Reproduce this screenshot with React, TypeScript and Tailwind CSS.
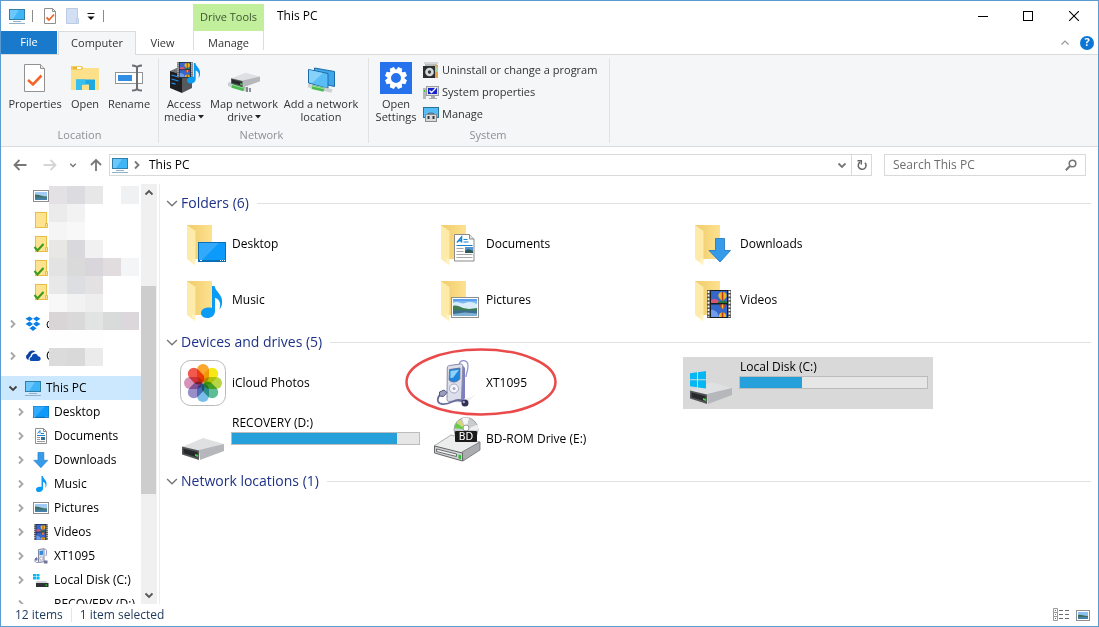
import { useState } from "react";
import type { ReactNode } from "react";
import clsx from "clsx";

/* ---------- shared picture pieces ---------- */

function MonitorIcon({ className = "w-4" }: { className?: string }) {
  return (
    <svg viewBox="0 0 16 16" className={clsx("shrink-0", className)} aria-hidden="true">
      <rect x="0" y="1" width="16" height="11" fill="#2f7fa8" />
      <rect x="1" y="2" width="14" height="9" fill="#3fb4f6" />
      <path d="M1 2h9L4 11H1z" fill="#6cc8fb" />
      <path d="M4 13.500h8M0 15.500h16" stroke="#8fb0c6" strokeWidth="1" />
    </svg>
  );
}

function DesktopArt() {
  return (
    <g>
      <rect x="0" y="0" width="28" height="20" fill="#0b6fb8" />
      <rect x="1" y="1" width="26" height="17" fill="#0c9bfb" />
      <path d="M1 1h20L4 18H1z" fill="#33a9fb" />
      <path d="M2 18.500h2M22 18.500h1M24 18.500h1M26 18.500h1" stroke="#fff" strokeWidth="1" />
    </g>
  );
}

function DocumentArt() {
  return (
    <g>
      <path d="M.5.5h15l4.500 4.500v22H.5z" fill="#fff" stroke="#8b8b8b" />
      <path d="M15.500.5v4.500H20" fill="#e4e4e4" stroke="#8b8b8b" />
      <path d="M3 8.500 7.500 3v5.500M4.500 6.800h3" fill="none" stroke="#1a85cf" strokeWidth="1.500" />
      <path d="M9.500 5.500h4M9.500 8h5M2.500 11.500h16" stroke="#1a85cf" strokeWidth="1.200" />
      <path d="M2.500 14.500h7M2.500 17.500h7M2.500 20.500h16M2.500 23.500h16" stroke="#a8a8a8" />
      <rect x="11" y="13" width="8" height="6" fill="#5693cf" />
      <path d="M11 17l3-2 5 2v2h-8z" fill="#2e5b55" />
    </g>
  );
}

function SmallDocumentArt() {
  return (
    <g>
      <path d="M2.500.5h8l3 3v12h-11z" fill="#fff" stroke="#8f8f8f" />
      <path d="M10.500.5v3h3" fill="none" stroke="#8f8f8f" />
      <path d="M4.500 5.500 7 2.500v3" fill="none" stroke="#1a85cf" />
      <path d="M4 7.500h8M8 5.500h3" stroke="#1a85cf" />
      <path d="M4 9.500h3M4 11.500h3M4 13.500h8" stroke="#9a9a9a" />
      <path d="M8 9h4v3H8z" fill="#3c6f96" />
    </g>
  );
}

function ArrowArt() {
  return <path d="M7.500.5h9v12h6L12 24 1 12.500h6.500z" fill="#369be9" stroke="#1d72c0" strokeWidth=".8" />;
}

function NoteArt() {
  return (
    <path
      d="M11 0h2.500c1 6 9 8.500 7.500 18-.4 2.500-1.600 4.500-2.200 5l-.3-.3c1.600-5 .5-9-4.500-11V25c0 4.500-3.500 7-8 7S0 29.500 0 26.800C0 23 5.500 20.500 11 22z"
      fill="#0a9bf5"
    />
  );
}

function PictureArt() {
  return (
    <g>
      <rect x=".5" y=".5" width="27" height="20" fill="#fff" stroke="#8f8f8f" />
      <rect x="2" y="2" width="24" height="17" fill="#7db8f0" />
      <path d="M2 2h24v2H2z" fill="#5c9fee" />
      <path d="M2 6c5-3 8 2 12 0s8-1 12 1v5H2z" fill="#d8ecfa" />
      <path d="M2 9c3-1 6 0 10 2l6 1 8-1v3H2z" fill="#3f7c52" />
      <path d="M2 13.500h24V19H2z" fill="#3d6f94" />
      <path d="M2 17l12-1.500 12 1v2.500H2z" fill="#7fb2d2" />
    </g>
  );
}

function SmallPictureArt() {
  return (
    <g>
      <rect x=".5" y="2.500" width="15" height="11" fill="#fff" stroke="#8f8f8f" />
      <rect x="2" y="4" width="12" height="8" fill="#9fcbf4" />
      <path d="M2 6.500c4 0 7 2 12 2V10H2z" fill="#3f6f5f" />
      <path d="M2 9.500h12V12H2z" fill="#4580a8" />
    </g>
  );
}

function FilmArt() {
  return (
    <g>
      <rect width="24" height="28" fill="#555" />
      <path d="M1.500 1v26M22.500 1v26" stroke="#fff" strokeWidth="1.800" strokeDasharray="2 1.600" />
      <rect x="3" y="0" width="18" height="28" fill="#1c1c1c" />
      <rect x="4" y="1" width="16" height="12" fill="#3566c9" />
      <rect x="4" y="14.500" width="16" height="12.500" fill="#3566c9" />
      <path d="M4 10c3-2 6-1 8 1v2H4z" fill="#d8557a" />
      <path d="M15.500 2c3.500 0 4.500 2.500 4 4.500-.3 1.800-2 3-4 4.500-2-1.500-3.700-2.700-4-4.500-.5-2 .5-4.500 4-4.500z" fill="#e9b81f" />
      <path d="M14.800 2h1.500v8.500h-1.500z" fill="#b83224" />
      <path d="M11 11.500h2.500l2-1 4.500 1V13h-9z" fill="#1f7a39" />
      <path d="M12.500 14.500h6c0 2-1.500 3.500-3 5-1.500-1.500-3-3-3-5z" fill="#c23a2a" />
      <path d="M14.800 14.500h1.500v4h-1.500z" fill="#f0c52c" />
      <path d="M4 20c3-1 4 2 6 2l2 5H4z" fill="#6f9dec" />
      <path d="M12 27c-.5-3 1-4.500 3.500-4.500S19.500 24 19 27z" fill="#e9b81f" />
      <path d="M14.800 22.500h1.500V27h-1.500z" fill="#b83224" />
    </g>
  );
}

function PlayerArt() {
  return (
    <g>
      <path d="M33 6c1-6 9-6 9 1 0 5-2 7-2 11" fill="none" stroke="#8b8ecb" strokeWidth="1.200" />
      <path d="M28 43l17-5 5-3-10 10z" fill="#efeff3" />
      <path d="M36 6l3 3v30l-3 4-6-1z" fill="#7d80c0" />
      <path d="M23.500 6.500l11-1.500c1.500 0 2.300.6 2.300 2l-1.300 32c-.1 1.500-.9 2.300-2.300 2.500l-9.700 1c-2 0-2.600-1-2.500-3L21.300 9c0-1.500.8-2.300 2.200-2.500z" fill="#dcdee9" stroke="#8a8cab" />
      <path d="M23.500 10.500l10.500-1.500-.2 11c-2.800 3.500-8 4-10.700 1z" fill="#1f86dc" stroke="#5f6690" strokeWidth=".8" />
      <path d="M24.500 12l8.500-1.200-6 8-2.600.3z" fill="#8fd2fa" />
      <circle cx="28" cy="29.500" r="4.500" fill="#f4f5fb" stroke="#a4a7c4" />
      <circle cx="28" cy="29.500" r="1.500" fill="#a6a9c8" />
      <path d="M15 35c-4 3-5 9 1 10 8 1 11-4 16-4 3 0 4 1 6 2" fill="none" stroke="#6a6e9c" strokeWidth="1.800" />
      <path d="M13.500 33l4.500-2 3 2.500-3.500 4-4-.5z" fill="#9a9dbd" stroke="#55597f" />
      <circle cx="39" cy="44" r="3.500" fill="#2f3250" />
      <circle cx="37.800" cy="43" r="1.200" fill="#a4a7cb" />
    </g>
  );
}

function SmallPlayerArt() {
  return (
    <g>
      <path d="M10 2c2-2 4-.5 3.500 2L13 8M4 9c-3 2-3 6 1 5.500" fill="none" stroke="#8b8ecb" />
      <path d="M5.500 1.500 11 .8v13l-5.500.7z" fill="#e4e5ee" stroke="#83869f" />
      <path d="M6.500 3 10 2.500v4.200l-3.500.5z" fill="#2f8ddc" />
      <circle cx="8.300" cy="10.500" r="1.600" fill="#fff" stroke="#9da0bb" strokeWidth=".8" />
      <path d="M11 12.500h3.500v3H11zM2 10h2.500v2.500H2z" fill="#6f7397" />
    </g>
  );
}

function DriveArt() {
  return (
    <g>
      <path d="M0 10 21 1l21 6-25 9z" fill="#dfe0e2" />
      <path d="M17 13 42 7v7L18 23z" fill="#b5b7bb" />
      <path d="M0 9.500 17 13.500V23L0 17.500z" fill="#54575a" />
      <path d="M1.500 11.500l14 3.600v5.500l-14-4.300z" fill="#26282a" />
      <path d="M13 17l3 .9v2l-3-.9z" fill="#37e03c" />
    </g>
  );
}

function SmallDriveArt() {
  return (
    <g>
      <path d="M3 9h10l2.500 2.500h-12z" fill="#d3d5d7" />
      <path d="M3 11h12.500v4H3z" fill="#2f3234" />
      <path d="M12.500 12.500H14v1.200h-1.500z" fill="#37e03c" />
    </g>
  );
}

function WindowsLogo() {
  return (
    <path
      d="M0 2.300 7 1.300v7H0zM8 1.200 16 0v8.300H8zM0 9.300h7v7l-7-1zM8 9.300h8v8.300l-8-1.200z"
      fill="#05b7f2"
    />
  );
}

const smallArt: Record<string, ReactNode> = {
  desktop: <g transform="translate(0 2) scale(.571 .6)"><DesktopArt /></g>,
  documents: <SmallDocumentArt />,
  downloads: <g transform="scale(.66)"><ArrowArt /></g>,
  music: <g transform="translate(3 0) scale(.5)"><NoteArt /></g>,
  pictures: <SmallPictureArt />,
  videos: <g transform="translate(1 0) scale(.58)"><FilmArt /></g>,
  player: <SmallPlayerArt />,
  drive: <SmallDriveArt />,
  windowsDrive: (
    <g>
      <SmallDriveArt />
      <path d="M0 2h3v2.500H0zM3.500 2h3v2.500h-3zM0 5h3v2.500H0zM3.500 5h3v2.500h-3z" fill="#05b7f2" />
    </g>
  ),
};

function SmallIcon({ name }: { name: string }) {
  return (
    <svg viewBox="0 0 16 16" className="h-4 w-4 shrink-0" aria-hidden="true">
      {smallArt[name]}
    </svg>
  );
}

function SmallFolder({ synced = false }: { synced?: boolean }) {
  return (
    <svg viewBox="0 0 16 16" className="h-4 w-4 shrink-0" aria-hidden="true">
      <rect x="2.500" y=".5" width="11" height="15" fill="#fde28f" stroke="#e6bd45" />
      <path d="M12.500 11.500h2v4h-2z" fill="#fde28f" stroke="#e6bd45" />
      {synced && <path d="M1.500 11l3 3.500L10.500 8" fill="none" stroke="#3a9a1c" strokeWidth="2" />}
    </svg>
  );
}

function DropboxIcon() {
  return (
    <svg viewBox="0 0 16 16" className="h-4 w-4 shrink-0" aria-hidden="true">
      <path
        d="M4.500 .5 8 2.800 4.500 5.300.5 2.800zM11.500.5l4 2.300-4 2.500L8 2.800zM.5 8l4-2.500L8 8l-3.500 2.500zM8 8l3.500-2.500 4 2.500-4 2.500zM8 9.800l3.500 2.400L8 15l-3.500-2.800z"
        fill="#0a7fe6"
      />
    </svg>
  );
}

function OneDriveIcon() {
  return (
    <svg viewBox="0 0 16 16" className="h-4 w-4 shrink-0" aria-hidden="true">
      <path d="M3.500 12A3.200 3.200 0 0 1 2.800 6 4.500 4.500 0 0 1 10.500 4c-3.500 0-5 2.400-4.800 4C4 8.500 3.400 10.500 3.500 12z" fill="#0d3f9e" />
      <path d="M6.500 13c-2.500 0-2.500-3.800.2-4C6.700 5.300 12 4.300 13 8.200c3.500.2 3.600 4.800.2 4.800z" fill="#0d4bb5" />
    </svg>
  );
}

type ChevronDirection = "right" | "down" | "up";
const chevronPaths: Record<ChevronDirection, string> = {
  right: "M3 1.500 6.500 5 3 8.500",
  down: "M1.500 3.500 5 7l3.500-3.500",
  up: "M1.500 6.500 5 3l3.500 3.500",
};

function Chevron({
  direction,
  className,
  weight = 1.8,
}: {
  direction: ChevronDirection;
  className?: string;
  weight?: number;
}) {
  return (
    <svg viewBox="0 0 10 10" className={clsx("shrink-0", className ?? "w-2.5")} aria-hidden="true">
      <path d={chevronPaths[direction]} fill="none" stroke="currentColor" strokeWidth={weight} />
    </svg>
  );
}

/* ---------- ribbon icons ---------- */

function PropertiesIcon({ className = "h-8 w-8" }: { className?: string }) {
  return (
    <svg viewBox="0 0 32 32" className={className} aria-hidden="true">
      <path d="M5.500 2.500h16l4 4v23h-20z" fill="#fff" stroke="#929292" />
      <path d="M21.500 2.500v4h4" fill="#e6e6e6" stroke="#929292" />
      <path d="M9 18l5 4.500 8.500-9" fill="none" stroke="#f2662b" strokeWidth="2.600" />
    </svg>
  );
}

function QuickPropertiesIcon() {
  return (
    <svg viewBox="0 0 16 16" className="h-4 w-4" aria-hidden="true">
      <path d="M2.500.5h8l3 3v12h-11z" fill="#fff" stroke="#8f8f8f" />
      <path d="M10.500.5v3h3" fill="none" stroke="#8f8f8f" />
      <path d="M4.500 9.500l2.500 2.500L12 6.500" fill="none" stroke="#f2662b" strokeWidth="1.800" />
    </svg>
  );
}

function OpenIcon() {
  return (
    <svg viewBox="0 0 32 32" className="h-8 w-8" aria-hidden="true">
      <path d="M2 4h11l2 3h15v21H2z" fill="#f6cd5c" />
      <path d="M4 5h8v2H4z" fill="#fff" />
      <path d="M4 5h4v2H4z" fill="#e8b63e" />
      <path d="M2 8h11l2-2h15v22H2z" fill="#fde08a" />
      <path d="M7 28V17.500h19V28h-6v-5.500h-7V28z" fill="#1ea9e2" />
      <path d="M7 28V17.500h9.500v5H13V28z" fill="#37bff0" />
    </svg>
  );
}

function RenameIcon() {
  return (
    <svg viewBox="0 0 32 32" className="h-8 w-8" aria-hidden="true">
      <rect x="2.500" y="10.500" width="27" height="11" fill="#fff" stroke="#8f9498" />
      <rect x="5" y="13" width="14" height="6" fill="#2f8de4" />
      <path d="M19 3.500c3 0 5 .5 5 2.500v20c0 2-2 2.500-5 2.500M29 3.500c-3 0-5 .5-5 2.500v20c0 2 2 2.500 5 2.500" fill="none" stroke="#6b6f73" strokeWidth="2" />
    </svg>
  );
}

function AccessMediaIcon() {
  return (
    <svg viewBox="0 0 32 32" className="h-8 w-8" aria-hidden="true">
      <path d="M2 9l9-4 12 3-8 5z" fill="#73777d" />
      <path d="M2 9l12 3.500V31L2 26z" fill="#1c1e22" />
      <path d="M14 12.500 24 9v17l-10 5z" fill="#55585d" />
      <path d="M3.500 13l7 2M3.500 17l7 2M3.500 21l4 1.200" stroke="#2590ee" strokeWidth="1.300" />
      <g transform="translate(9 0) scale(.66 .56)"><FilmArt /></g>
      <g transform="translate(19 1) scale(.62 .64)"><NoteArt /></g>
    </svg>
  );
}

function MapDriveIcon() {
  return (
    <svg viewBox="0 0 32 32" className="h-8 w-8" aria-hidden="true">
      <path d="M0 22l20 6" stroke="#c9cdd0" strokeWidth="4" />
      <path d="M4 23.500l12 3.500" stroke="#4dbb52" strokeWidth="4.500" />
      <path d="M4 22.500l12 3.500" stroke="#9be39c" strokeWidth="1" />
      <path d="M19 25v5M22 26v4" stroke="#6d7276" strokeWidth="1.500" />
      <g transform="translate(3 10) scale(.69 .66)"><DriveArt /></g>
    </svg>
  );
}

function AddLocationIcon() {
  return (
    <svg viewBox="0 0 32 32" className="h-8 w-8" aria-hidden="true">
      <path d="M9.500 6l20 3.500v15L9.500 20z" fill="#3fa6ea" stroke="#1d6ca8" />
      <path d="M3.500 7.500 23 11.500v15L3.500 21z" fill="#5bbdf5" stroke="#1d6ca8" />
      <path d="M4 8l14 3-11 10-3-.7z" fill="#86d2fb" />
      <path d="M3 23.500l24 5.500" stroke="#cdd1d4" strokeWidth="3.500" />
      <path d="M7 25l12 2.700" stroke="#4dbb52" strokeWidth="4" />
      <path d="M7 24l12 2.700" stroke="#9be39c" strokeWidth="1" />
    </svg>
  );
}

const gearTeeth = [0, 45, 90, 135, 180, 225, 270, 315];

function SettingsIcon() {
  return (
    <svg viewBox="0 0 32 32" className="h-8 w-8" aria-hidden="true">
      <rect width="32" height="32" fill="#2672ec" />
      {gearTeeth.map((angle) => (
        <path key={angle} d="M13.800 5h4.400l1 5h-6.400z" fill="#fff" transform={`rotate(${angle + 22.5} 16 16)`} />
      ))}
      <circle cx="16" cy="16" r="6.800" fill="none" stroke="#fff" strokeWidth="3.600" />
    </svg>
  );
}

function UninstallIcon() {
  return (
    <svg viewBox="0 0 16 16" className="h-4 w-4 shrink-0" aria-hidden="true">
      <path d="M2 1h12v14H2z" fill="#b9bdbd" />
      <path d="M10 3h5v13h-5z" fill="#e5a24e" />
      <path d="M1 0h14v2H1z" fill="#d2d6d6" />
      <path d="M11 3l4 3v4h-4z" fill="#a9cfa2" />
      <rect x="0" y="4" width="12" height="12" fill="#2c2f30" />
      <circle cx="6.500" cy="10" r="4.300" fill="#d7dadb" />
      <circle cx="6.500" cy="10" r="1.700" fill="#3b3e40" />
    </svg>
  );
}

function SystemIcon() {
  return (
    <svg viewBox="0 0 16 16" className="h-4 w-4 shrink-0" aria-hidden="true">
      <path d="M0 4h3v11H0z" fill="#b6b9bb" />
      <path d="M1 6h1v2H1z" fill="#3ac43a" />
      <rect x="3.500" y="2.500" width="12" height="9" fill="#e0e2e4" stroke="#9a9da0" />
      <rect x="5" y="4" width="9" height="6" fill="#1522c8" />
      <path d="M6.500 6.500l2 2L13 4" fill="none" stroke="#fff" strokeWidth="1.300" />
      <path d="M8 12h4v2h2v1H6v-1h2z" fill="#a7aaad" />
    </svg>
  );
}

function ManageIcon() {
  return (
    <svg viewBox="0 0 16 16" className="h-4 w-4 shrink-0" aria-hidden="true">
      <rect x=".5" y="1.500" width="15" height="10" fill="#57bdf7" stroke="#28729f" />
      <path d="M5 8.500c0-2 6-2 6 0" fill="none" stroke="#5b5f62" strokeWidth="1.200" />
      <rect x="2.500" y="8.500" width="11" height="7" fill="#dadcdd" stroke="#898c8e" />
      <path d="M4.500 10h2v3h-2zM9.500 10h2v3h-2z" fill="#34373a" />
    </svg>
  );
}

/* ---------- large tile icons ---------- */

function FolderTileIcon({ children }: { children: ReactNode }) {
  return (
    <svg viewBox="0 0 48 48" className="h-12 w-12" aria-hidden="true">
      <defs>
        <linearGradient id="folder-back" x1="0" x2="1">
          <stop offset="0" stopColor="#efcb6b" />
          <stop offset="1" stopColor="#fde28f" />
        </linearGradient>
      </defs>
      <path d="M7 5h25v34H7z" fill="url(#folder-back)" />
      <path d="M7 5l8.500 6v28l-.5 6-8-6z" fill="#feeaa9" />
      <path d="M14.500 39v6l-2-1.500V38z" fill="#fff3cd" />
      {children}
    </svg>
  );
}

const petals: [number, string][] = [
  [0, "#f9a11b"],
  [45, "#f5e600"],
  [90, "#b2d234"],
  [135, "#4fb98c"],
  [180, "#6db8e8"],
  [225, "#8f85c5"],
  [270, "#d489b4"],
  [315, "#f04b3c"],
];

function PhotosIcon() {
  return (
    <svg viewBox="0 0 48 48" className="h-12 w-12" aria-hidden="true">
      <rect x=".5" y="1.500" width="45" height="45" rx="10" fill="#fff" stroke="#b9b9b9" />
      {petals.map(([angle, color]) => (
        <rect
          key={angle}
          x="17"
          y="5"
          width="12"
          height="18.500"
          rx="6"
          fill={color}
          transform={`rotate(${angle} 23 24)`}
          className="mix-blend-multiply"
          opacity=".92"
        />
      ))}
    </svg>
  );
}

function DiscDriveIcon() {
  return (
    <svg viewBox="0 0 48 48" className="h-12 w-12" aria-hidden="true">
      <circle cx="32" cy="14.500" r="12" fill="#c9cccf" stroke="#9ea2a5" />
      <path d="M32 14.500 20.500 13a12 12 0 0 1 2-5z" fill="#62cf3b" />
      <path d="M32 14.500 23 7a12 12 0 0 1 3-2.500z" fill="#d8d56a" />
      <path d="M32 14.500 28 3.500a12 12 0 0 1 7-.6z" fill="#f5f6f7" />
      <path d="M32 14.500l11.500-5a12 12 0 0 1 .5 6z" fill="#eceef0" />
      <circle cx="32" cy="13" r="3" fill="#fff" stroke="#999" />
      <path d="M0 31 17 20l29 7-17 12z" fill="#eceded" stroke="#9a9c9e" strokeWidth=".8" />
      <path d="M28 37 46 27v8L29 46z" fill="#aaadaf" stroke="#707375" strokeWidth=".8" />
      <path d="M.5 31l28 7v8L.5 38z" fill="#cfd1d2" stroke="#646769" />
      <path d="M2.500 34l20 5v2.500l-20-5z" fill="#f4f4f4" stroke="#4d5052" strokeWidth=".8" />
      <path d="M24.500 39.500l2.500.7v4l-2.500-.6z" fill="#2bbd2b" />
      <rect x="21" y="16" width="22" height="11" rx="1" fill="#1b1b1b" />
      <text x="32" y="25" textAnchor="middle" fill="#fff" className="font-['DejaVu_Sans',sans-serif] text-[10px]">
        BD
      </text>
    </svg>
  );
}

function DriveTileIcon({ windows = false }: { windows?: boolean }) {
  return (
    <svg viewBox="0 0 48 48" className="h-12 w-12" aria-hidden="true">
      <g transform="translate(2 24)"><DriveArt /></g>
      {windows && <g transform="translate(2 14)"><WindowsLogo /></g>}
    </svg>
  );
}

/* ---------- title bar and tabs ---------- */

function TitleBar() {
  return (
    <header className="flex h-[30px] shrink-0 items-stretch">
      <div className="flex w-48 items-center pl-2">
        <MonitorIcon className="w-4" />
        <span className="ml-[7px] h-3 w-px bg-[#8a8a8a]" />
        <button aria-label="Properties" className="ml-[9px]">
          <QuickPropertiesIcon />
        </button>
        <button aria-label="New folder" className="ml-1.5">
          <svg viewBox="0 0 16 16" className="h-4 w-4" aria-hidden="true">
            <path d="M2.500.5h11v10h1v5h-12z" fill="#d3e0f4" stroke="#bccce4" />
            <path d="M12.500 10v5" stroke="#bccce4" />
          </svg>
        </button>
        <button aria-label="Customize Quick Access Toolbar" className="ml-1.5">
          <svg viewBox="0 0 10 10" className="h-2.5 w-2.5" aria-hidden="true">
            <path d="M1.500 2.500h7" stroke="#111" />
            <path d="M1.500 5.500h7L5 9z" fill="#111" />
          </svg>
        </button>
        <span className="ml-[7px] h-3 w-px bg-[#8a8a8a]" />
      </div>
      <div className="mt-[3px] flex w-[71px] items-center justify-center bg-[#c2ef9c] text-[11px] text-[#3f5330]">
        Drive Tools
      </div>
      <h1 className="ml-[13px] flex-1 self-center text-xs text-black">This PC</h1>
      <div className="flex items-center">
        <button aria-label="Minimize" className="flex h-7 w-[46px] items-center justify-center">
          <svg viewBox="0 0 10 10" className="h-2.5 w-2.5" aria-hidden="true">
            <path d="M0 5.500h10" stroke="#000" />
          </svg>
        </button>
        <button aria-label="Maximize" className="flex h-7 w-11 items-center justify-center">
          <svg viewBox="0 0 10 10" className="h-2.5 w-2.5" aria-hidden="true">
            <rect x=".5" y=".5" width="9" height="9" fill="none" stroke="#000" />
          </svg>
        </button>
        <button aria-label="Close" className="flex h-7 w-12 items-center justify-center">
          <svg viewBox="0 0 10 10" className="h-2.5 w-2.5" aria-hidden="true">
            <path d="M0 0l10 10M10 0 0 10" stroke="#000" strokeWidth="1.100" />
          </svg>
        </button>
      </div>
    </header>
  );
}

function RibbonTabs() {
  return (
    <nav aria-label="Ribbon tabs" className="relative flex h-6 shrink-0 border-b border-[#d9dbdd] text-[11px] text-[#333]">
      <button className="w-14 bg-[#1979ca] text-white">File</button>
      <button className="-mb-px ml-px w-[78px] border border-b-0 border-[#d9dbdd] bg-[#f4f6f8]">Computer</button>
      <button className="w-[57px] pt-0.5 pr-1">View</button>
      <button className="mb-1 w-[71px] border-x border-[#dcdcdc] pt-1">Manage</button>
      <div className="ml-auto flex items-center gap-2.5 pr-1">
        <button aria-label="Minimize the ribbon" className="text-[#999]">
          <Chevron direction="up" weight={1.2} />
        </button>
        <button
          aria-label="Help"
          className="flex h-3.5 w-3.5 items-center justify-center rounded-full bg-[#0b76d6] text-[11px] font-bold text-white"
        >
          ?
        </button>
      </div>
    </nav>
  );
}

/* ---------- ribbon ---------- */

function BigButton({
  icon,
  lines,
  width,
  menu = false,
}: {
  icon: ReactNode;
  lines: string[];
  width: string;
  menu?: boolean;
}) {
  return (
    <button className={clsx("flex flex-col items-center pt-1.5", width)}>
      {icon}
      <span className="mt-[3px] text-[11px] leading-[13px] whitespace-nowrap">
        {lines.map((line, index) => (
          <span key={line} className="flex items-center justify-center gap-0.5">
            {line}
            {menu && index === lines.length - 1 && (
              <svg viewBox="0 0 6 6" className="h-1.5 w-1.5" aria-hidden="true">
                <path d="M0 1h6L3 4.500z" fill="#222" />
              </svg>
            )}
          </span>
        ))}
      </span>
    </button>
  );
}

function RibbonGroup({ label, className, children }: { label: string; className: string; children: ReactNode }) {
  return (
    <section
      aria-label={label}
      className={clsx("my-[3px] flex shrink-0 flex-col border-r border-[#e0e2e4]", className)}
    >
      <div className="-mt-0.5 flex h-[74px] items-start">{children}</div>
      <div className="pr-1.5 text-center text-[11px] leading-4 text-[#8d9093]">{label}</div>
    </section>
  );
}

const systemActions = [
  { label: "Uninstall or change a program", icon: <UninstallIcon /> },
  { label: "System properties", icon: <SystemIcon /> },
  { label: "Manage", icon: <ManageIcon /> },
];

function Ribbon() {
  return (
    <div className="flex h-[92px] shrink-0 border-b border-[#d9dbdd] bg-[#f4f6f8] text-[#333]">
      <RibbonGroup label="Location" className="w-[158px] pl-1.5">
        <BigButton icon={<PropertiesIcon />} lines={["Properties"]} width="w-14" />
        <BigButton icon={<OpenIcon />} lines={["Open"]} width="w-11" />
        <BigButton icon={<RenameIcon />} lines={["Rename"]} width="w-11" />
      </RibbonGroup>
      <RibbonGroup label="Network" className="w-[210px] pl-0.5">
        <BigButton icon={<AccessMediaIcon />} lines={["Access", "media"]} width="w-[46px]" menu />
        <BigButton icon={<MapDriveIcon />} lines={["Map network", "drive"]} width="w-[74px]" menu />
        <BigButton icon={<AddLocationIcon />} lines={["Add a network", "location"]} width="w-20" />
      </RibbonGroup>
      <RibbonGroup label="System" className="w-[241px] pl-1">
        <BigButton icon={<SettingsIcon />} lines={["Open", "Settings"]} width="w-[46px]" />
        <div className="ml-1 flex flex-col pt-[3px]">
          {systemActions.map(({ label, icon }) => (
            <button key={label} className="flex h-[22px] items-center gap-[3px] text-[11px]">
              {icon}
              {label}
            </button>
          ))}
        </div>
      </RibbonGroup>
    </div>
  );
}

/* ---------- address bar ---------- */

function ArrowIcon({ d }: { d: string }) {
  return (
    <svg viewBox="0 0 14 14" className="h-3.5 w-3.5" aria-hidden="true">
      <path d={d} fill="none" stroke="currentColor" strokeWidth="1.800" />
    </svg>
  );
}

function AddressBar() {
  const [query, setQuery] = useState("");
  return (
    <div className="flex h-[37px] shrink-0 items-center px-3 pb-0.5">
      <button aria-label="Back" className="text-[#777]">
        <ArrowIcon d="M13.500 7H1.500M6.500 2 1.500 7l5 5" />
      </button>
      <button aria-label="Forward" className="ml-4 text-[#d5d5d5]">
        <ArrowIcon d="M.5 7h12M7.500 2l5 5-5 5" />
      </button>
      <button aria-label="Recent locations" className="ml-3 text-[#777]">
        <Chevron direction="down" className="w-2" />
      </button>
      <button aria-label="Up" className="ml-3 text-[#777]">
        <ArrowIcon d="M7 13v-11M2 7l5-5 5 5" />
      </button>
      <div className="ml-1.5 flex h-[22px] flex-1 items-center border border-[#d9d9d9]">
        <MonitorIcon className="ml-0.5 w-4" />
        <Chevron direction="right" className="ml-1 w-2.5 text-[#777]" />
        <a href="#this-pc" className="ml-[7px] flex-1 text-xs text-black">
          This PC
        </a>
        <button aria-label="Previous locations" className="mr-1 text-[#777]">
          <Chevron direction="down" />
        </button>
        <button aria-label="Refresh" className="flex h-full w-5 items-center justify-center border-l border-[#d9d9d9] text-[#666]">
          <svg viewBox="0 0 12 12" className="h-3 w-3" aria-hidden="true">
            <path d="M4 3.200A3.900 3.900 0 1 0 9 3.800" fill="none" stroke="currentColor" strokeWidth="1.500" />
            <path d="M1.500 1.700h3.800v3.800" fill="none" stroke="currentColor" strokeWidth="1.500" />
          </svg>
        </button>
      </div>
      <label className="ml-3 flex h-[22px] w-[202px] items-center border border-[#d9d9d9] pr-2 pl-2 text-[#777]">
        <input
          aria-label="Search This PC"
          placeholder="Search This PC"
          value={query}
          onChange={(event) => setQuery(event.target.value)}
          className="min-w-0 flex-1 text-xs outline-none placeholder:text-[#6d6d6d]"
        />
        <svg viewBox="0 0 12 12" className="h-3 w-3" aria-hidden="true">
          <circle cx="7.500" cy="4.500" r="3.300" fill="none" stroke="currentColor" strokeWidth="1.600" />
          <path d="M5 7 .8 11.200" stroke="currentColor" strokeWidth="2" />
        </svg>
      </label>
    </div>
  );
}

/* ---------- navigation pane ---------- */

const redaction: (string | null)[] = [
  "bg-[#e3e1e3]", "bg-[#dcdce0]", "bg-[#e7e7e7]", null, "bg-[#f0f1f3]",
  "bg-[#ebebeb]", "bg-[#f2f2f2]", null, null, null,
  "bg-[#f5f5f5]", "bg-[#f8f8f8]", null, null, null,
  "bg-[#e8e7e4]", "bg-[#d9d9dd]", "bg-[#f1f1f1]", null, null,
  "bg-[#e3e3e3]", "bg-[#dadada]", "bg-[#d8d6da]", "bg-[#e1dddf]", "bg-[#f4f5f7]",
  "bg-[#e8e8e9]", "bg-[#dddee2]", "bg-[#e4e1e3]", null, null,
  "bg-[#f8f8f8]", "bg-[#f2f2f2]", "bg-[#eeeeee]", null, null,
  "bg-[#d9d5d6]", "bg-[#d9d9da]", "bg-[#e2e3e3]", "bg-[#d9dada]", "bg-[#dcd7da]",
  "bg-[#fefefe]", "bg-[#fefefe]", "bg-[#fefefe]", null, null,
  "bg-[#dbdbdb]", "bg-[#d9d9d9]", "bg-[#ebebeb]", null, null,
];

const computerChildren = [
  { label: "Desktop", icon: "desktop" },
  { label: "Documents", icon: "documents" },
  { label: "Downloads", icon: "downloads" },
  { label: "Music", icon: "music" },
  { label: "Pictures", icon: "pictures" },
  { label: "Videos", icon: "videos" },
  { label: "XT1095", icon: "player" },
  { label: "Local Disk (C:)", icon: "windowsDrive" },
  { label: "RECOVERY (D:)", icon: "drive" },
];

function NavigationPane() {
  return (
    <aside className="flex w-[159px] shrink-0 border-r border-[#ececec]">
      <nav aria-label="Folders" className="relative min-w-0 flex-1 overflow-hidden text-xs whitespace-nowrap text-black">
        <ul>
          <li className="flex h-6 items-center pl-8"><SmallIcon name="pictures" /></li>
          <li className="flex h-6 items-center pl-8"><SmallFolder /></li>
          <li className="flex h-6 items-center pl-8"><SmallFolder synced /></li>
          <li className="flex h-6 items-center pl-8"><SmallFolder synced /></li>
          <li className="flex h-6 items-center pl-8"><SmallFolder synced /></li>
          <li className="mt-2 flex h-6 items-center gap-[7px] pl-[7px]">
            <Chevron direction="right" className="w-2.5 text-[#a6a6a6]" />
            <DropboxIcon />
            <span className="-ml-0.5">d</span>
          </li>
          <li className="mt-2 flex h-6 items-center gap-[7px] pl-[7px]">
            <Chevron direction="right" className="w-2.5 text-[#a6a6a6]" />
            <OneDriveIcon />
            <span className="-ml-0.5">O</span>
          </li>
          <li className="mt-2 flex h-6 items-center gap-[7px] bg-[#cce8ff] pl-[7px]">
            <Chevron direction="down" className="w-2.5 text-[#404040]" />
            <MonitorIcon className="w-4" />
            <a href="#this-pc" className="-ml-0.5">This PC</a>
          </li>
          {computerChildren.map(({ label, icon }) => (
            <li key={label} className="flex h-6 items-center gap-[7px] pl-[15px]">
              <Chevron direction="right" className="w-2.5 text-[#a6a6a6]" />
              <SmallIcon name={icon} />
              <a href="#item" className="-ml-0.5">{label}</a>
            </li>
          ))}
        </ul>
        <div aria-hidden="true" className="absolute top-0.5 left-12 grid grid-cols-5">
          {redaction.map((color, index) => (
            <span key={index} className={clsx("h-[18px] w-[18px]", color)} />
          ))}
        </div>
      </nav>
      <div className="mr-0.5 flex w-4 flex-col items-center bg-[#f0f0f0] text-[#555]">
        <button aria-label="Scroll up" className="flex h-[18px] items-center">
          <Chevron direction="up" />
        </button>
        <div className="flex w-full flex-1 flex-col">
          <span className="h-[22%]" />
          <span className="h-[54%] w-[15px] bg-[#cdcdcd]" />
        </div>
        <button aria-label="Scroll down" className="flex h-[18px] items-center">
          <Chevron direction="down" />
        </button>
      </div>
    </aside>
  );
}

/* ---------- file list ---------- */

function Group({ title, children }: { title: string; children?: ReactNode }) {
  return (
    <section>
      <h2 className="flex h-[31px] items-center text-sm text-[#1e3287]">
        <Chevron direction="down" className="mr-0.5 w-3.5 text-[#777]" weight={1} />
        {title}
        <span className="mt-px ml-2 h-px flex-1 bg-[#e2e2e2]" />
      </h2>
      <div className="flex flex-wrap gap-1 pl-[10px]">{children}</div>
    </section>
  );
}

function Tile({ icon, label, children }: { icon: ReactNode; label: string; children?: ReactNode }) {
  return (
    <div className="relative flex h-[52px] w-[250px] items-center pl-[5px]">
      {icon}
      <span className="ml-1 text-xs text-black">{label}</span>
      {children}
    </div>
  );
}

function DriveTile({ label, used, selected = false }: { label: string; used: number; selected?: boolean }) {
  return (
    <div className={clsx("flex h-[52px] w-[250px] items-start pl-[5px]", selected && "bg-[#d9d9d9]")}>
      <DriveTileIcon windows={selected} />
      <div className="ml-[3px] w-[189px] pt-0.5">
        <div className="pl-px text-xs leading-4 text-black">{label}</div>
        <div
          role="meter"
          aria-label={`${label} space used`}
          aria-valuenow={used}
          aria-valuemin={0}
          aria-valuemax={100}
          className="mt-px h-[13px] border border-[#bcbcbc] bg-[#e6e6e6]"
        >
          <div className="h-full bg-[#26a0da]" style={{ width: `${used}%` }} />
        </div>
      </div>
    </div>
  );
}

const folders: { label: string; art: ReactNode }[] = [
  { label: "Desktop", art: <g transform="translate(18 22)"><DesktopArt /></g> },
  { label: "Documents", art: <g transform="translate(20 14)"><DocumentArt /></g> },
  { label: "Downloads", art: <g transform="translate(20 18)"><ArrowArt /></g> },
  { label: "Music", art: <g transform="translate(21 10)"><NoteArt /></g> },
  { label: "Pictures", art: <g transform="translate(17 21)"><PictureArt /></g> },
  { label: "Videos", art: <g transform="translate(19 14)"><FilmArt /></g> },
];

function FileList() {
  return (
    <main className="min-w-0 flex-1 overflow-hidden pt-[3px] pr-[7px] pl-[5px]">
      <Group title="Folders (6)">
        {folders.map(({ label, art }) => (
          <Tile key={label} label={label} icon={<FolderTileIcon>{art}</FolderTileIcon>} />
        ))}
      </Group>
      <Group title="Devices and drives (5)">
        <Tile label="iCloud Photos" icon={<PhotosIcon />} />
        <Tile
          label="XT1095"
          icon={
            <svg viewBox="0 0 48 48" className="h-12 w-12" aria-hidden="true">
              <g transform="translate(-8 0)"><PlayerArt /></g>
            </svg>
          }
        >
          <svg viewBox="0 0 152 68" className="pointer-events-none absolute -top-[9px] -left-6 w-[152px]" aria-hidden="true">
            <ellipse cx="76" cy="34" rx="74.500" ry="32.500" fill="none" stroke="#ea4a4a" strokeWidth="2.500" />
          </svg>
        </Tile>
        <DriveTile label="Local Disk (C:)" used={33} selected />
        <DriveTile label="RECOVERY (D:)" used={88} />
        <Tile label="BD-ROM Drive (E:)" icon={<DiscDriveIcon />} />
      </Group>
      <Group title="Network locations (1)" />
    </main>
  );
}

function StatusBar() {
  return (
    <footer className="flex h-[22px] shrink-0 items-center pr-2 pl-3.5 text-xs text-[#1e395b]">
      <span>12 items</span>
      <span className="mx-2 h-3.5 w-px bg-[#e5e5e5]" />
      <span>1 item selected</span>
      <button aria-label="Details view" className="ml-auto">
        <svg viewBox="0 0 16 14" className="h-3.5 w-4" aria-hidden="true">
          <path d="M.5.5h4v12h-4zM.5 4.500h4M.5 8.500h4" fill="#fff" stroke="#9b9b9b" />
          <path d="M2 2h1v1H2z" fill="#555" />
          <path d="M2 6h1v1H2z" fill="#4a97d9" />
          <path d="M2 10h1v1H2z" fill="#c23a22" />
          <path d="M6 2.500h4M12 2.500h4M6 6.500h4M12 6.500h4M6 10.500h4M12 10.500h4" stroke="#6b6b6b" />
        </svg>
      </button>
      <button aria-label="Large icons view" className="ml-[7px]">
        <svg viewBox="0 0 14 11" className="h-[11px] w-3.5" aria-hidden="true">
          <rect x=".5" y=".5" width="13" height="10" fill="#fff" stroke="#8f8f8f" />
          <rect x="2" y="2" width="10" height="7" fill="#8cc0f2" />
          <path d="M2 5c4-1 6 1 10 1v1.500H2z" fill="#3f6f5f" />
          <path d="M2 7h10v2H2z" fill="#4580a8" />
        </svg>
      </button>
    </footer>
  );
}

export default function App() {
  return (
    <div className="flex h-screen min-h-0 w-full flex-col overflow-hidden border border-[#5b9bd0] bg-white font-['Open_Sans','Noto_Sans',sans-serif]">
      <TitleBar />
      <RibbonTabs />
      <Ribbon />
      <AddressBar />
      <div className="flex min-h-0 flex-1">
        <NavigationPane />
        <FileList />
      </div>
      <StatusBar />
    </div>
  );
}
